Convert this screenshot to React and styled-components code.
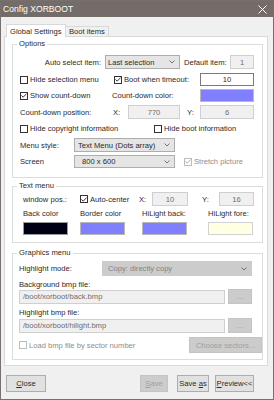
import React from "react";
import styled, { createGlobalStyle } from "styled-components";

const GlobalStyle = createGlobalStyle`
  html, body {
    margin: 0;
    padding: 0;
    background: #f0f0f0;
  }
  body {
    font-family: "Liberation Sans", Arial, sans-serif;
    font-size: 7.6px;
    color: #2a2a2a;
  }
  * {
    box-sizing: border-box;
  }
`;

const Window = styled.div`
  width: 274px;
  height: 400px;
  border: 1px solid #77706c;
  background: #f0f0f0;
  display: flex;
  flex-direction: column;
  overflow: hidden;
`;

const TitleBar = styled.div`
  height: 16px;
  flex-shrink: 0;
  background: #736c68;
  color: #fff;
  font-size: 8.6px;
  display: flex;
  align-items: center;
  justify-content: space-between;
  padding: 0 6px 0 2px;
`;

const Body = styled.div`
  flex: 1;
  display: flex;
  flex-direction: column;
  padding: 7px 5px 0 3px;
`;

const Tabs = styled.div`
  display: flex;
  align-items: flex-end;
  height: 13px;
  padding-left: 2px;
  margin-bottom: -1px;
`;

const Tab = styled.div`
  width: ${(p) => p.w}px;
  height: ${(p) => (p.active ? 13 : 11)}px;
  padding-left: 3px;
  border: 1px solid #d9d9d9;
  border-bottom: ${(p) => (p.active ? "none" : "1px solid #d9d9d9")};
  background: ${(p) => (p.active ? "#fff" : "#f0f0f0")};
  margin-left: ${(p) => (p.active ? 0 : -1)}px;
  position: relative;
  z-index: ${(p) => (p.active ? 1 : 0)};
  display: flex;
  align-items: center;
  white-space: nowrap;
`;

const Panel = styled.div`
  height: 330px;
  border: 1px solid #d9d9d9;
  background: #fff;
  padding: 2px 4px 5px 7px;
  display: flex;
  flex-direction: column;
`;

const Group = styled.fieldset`
  margin: ${(p) => p.mt || 0}px 0 0 0;
  padding: 0;
  min-width: 0;
  height: ${(p) => p.h}px;
  border: 1px solid #dcdcdc;
`;

const Legend = styled.legend`
  margin-left: 4px;
  padding: 0 2px;
  line-height: 10px;
`;

const Inner = styled.div`
  display: flex;
  flex-direction: column;
  padding: ${(p) => p.pt}px 0 0 ${(p) => p.pl}px;
`;

const Row = styled.div`
  display: flex;
  align-items: center;
  height: ${(p) => p.h}px;
  margin-top: ${(p) => p.mt || 0}px;
  white-space: nowrap;
`;

const Label = styled.span`
  width: ${(p) => (p.w ? `${p.w}px` : "auto")};
  margin-left: ${(p) => p.ml || 0}px;
  text-align: ${(p) => (p.right ? "right" : "left")};
  padding-right: ${(p) => (p.right ? 4 : 0)}px;
  color: ${(p) => (p.disabled ? "#8c8c8c" : "inherit")};
  flex-shrink: 0;
`;

const Field = styled.div`
  width: ${(p) => p.w}px;
  height: ${(p) => p.h || 14}px;
  flex-shrink: 0;
  border: 1px solid ${(p) => (p.disabled ? "#cfcfcf" : "#7a7a7a")};
  background: ${(p) => (p.disabled ? "#f0f0f0" : "#fff")};
  color: ${(p) => (p.disabled ? "#6d6d6d" : "inherit")};
  display: flex;
  align-items: center;
  justify-content: ${(p) => (p.left ? "flex-start" : "center")};
  padding: 0 3px;
`;

const Combo = styled.div`
  width: ${(p) => p.w}px;
  height: ${(p) => p.h || 14}px;
  flex-shrink: 0;
  background: ${(p) => (p.disabled ? "#cccccc" : "#e5e5e5")};
  border: 1px solid ${(p) => (p.disabled ? "#cccccc" : "#adadad")};
  color: ${(p) => (p.disabled ? "#838383" : "inherit")};
  display: flex;
  align-items: center;
  justify-content: space-between;
  padding: 0 4px 0 ${(p) => p.pad || 2}px;
`;

const Swatch = styled.div`
  width: ${(p) => p.w}px;
  height: 13px;
  flex-shrink: 0;
  background: ${(p) => p.color};
  border: 1px solid ${(p) => p.edge || "#b9b9b9"};
`;

const CheckItem = styled.label`
  width: ${(p) => (p.w ? `${p.w}px` : "auto")};
  margin-left: ${(p) => p.ml || 0}px;
  flex: ${(p) => (p.w ? "none" : 1)};
  display: flex;
  align-items: center;
  color: ${(p) => (p.disabled ? "#8c8c8c" : "inherit")};
`;

const Box = styled.span`
  width: 8px;
  height: 8px;
  margin-right: 2px;
  flex-shrink: 0;
  border: 1px solid ${(p) => (p.disabled ? "#bcbcbc" : "#333")};
  background: #fff;
  display: inline-flex;
  align-items: center;
  justify-content: center;
`;

const ColorGrid = styled.div`
  display: grid;
  grid-template-columns: 57px 62px 66px 45px;
  margin-top: 2px;
`;

const ColorCell = styled.div`
  display: flex;
  flex-direction: column;
  gap: 2px;
  line-height: 12px;
  white-space: nowrap;
`;

const Button = styled.div`
  width: ${(p) => p.w}px;
  height: ${(p) => p.h || 17}px;
  margin-left: ${(p) => p.ml || 0}px;
  flex-shrink: 0;
  background: ${(p) => (p.disabled ? "#cccccc" : "#e1e1e1")};
  border: 1px solid ${(p) => (p.disabled ? "#c4c4c4" : "#adadad")};
  color: ${(p) => (p.disabled ? "#a0a0a0" : "inherit")};
  display: flex;
  align-items: center;
  justify-content: center;
  white-space: pre;
`;

const ButtonBar = styled.div`
  display: flex;
  align-items: center;
  margin-top: 9px;
  padding: 0 14px 0 2px;
`;

const Spacer = styled.div`
  flex: 1;
`;

const U = styled.span`
  text-decoration: underline;
`;

const Chevron = () => (
  <svg width="6" height="4" viewBox="0 0 6 4">
    <polyline points="0.5,0.5 3,3 5.5,0.5" fill="none" stroke="#666" strokeWidth="0.9" />
  </svg>
);

const Check = ({ checked, disabled, children, w, ml }) => (
  <CheckItem w={w} ml={ml} disabled={disabled}>
    <Box disabled={disabled}>
      {checked && (
        <svg width="6" height="5" viewBox="0 0 6 5">
          <polyline
            points="0.4,2.4 2.2,4.2 5.6,0.6"
            fill="none"
            stroke={disabled ? "#a8a8a8" : "#222"}
            strokeWidth="0.9"
          />
        </svg>
      )}
    </Box>
    {children}
  </CheckItem>
);

const Select = ({ w, h, pad, disabled, children }) => (
  <Combo w={w} h={h} pad={pad} disabled={disabled}>
    <span>{children}</span>
    <Chevron />
  </Combo>
);

export default function App() {
  return (
    <>
      <GlobalStyle />
      <Window>
        <TitleBar>
          <span>Config XORBOOT</span>
          <svg width="9" height="9" viewBox="0 0 9 9">
            <path d="M0.5 0.5 L8.5 8.5 M8.5 0.5 L0.5 8.5" stroke="#fff" strokeWidth="1" />
          </svg>
        </TitleBar>
        <Body>
          <Tabs>
            <Tab active w={60}>Global Settings</Tab>
            <Tab w={44}>Boot items</Tab>
          </Tabs>
          <Panel>
            <Group h={139}>
              <Legend>Options</Legend>
              <Inner pt={6} pl={7}>
                <Row h={14}>
                  <Label w={85} right>Auto select item:</Label>
                  <Select w={75}>Last selection</Select>
                  <Label w={46} ml={4}>Default item:</Label>
                  <Field w={24} disabled>1</Field>
                </Row>
                <Row h={13} mt={4}>
                  <Check w={94}>Hide selection menu</Check>
                  <Check w={86} checked>Boot when timeout:</Check>
                  <Field w={54} h={13}>10</Field>
                </Row>
                <Row h={13} mt={3}>
                  <Check w={92} checked>Show count-down</Check>
                  <Label w={88}>Count-down color:</Label>
                  <Swatch w={54} color="#7f7fff" />
                </Row>
                <Row h={14} mt={3}>
                  <Label w={93}>Count-down position:</Label>
                  <Label w={15}>X:</Label>
                  <Field w={52} disabled>770</Field>
                  <Label w={13} ml={7}>Y:</Label>
                  <Field w={54} disabled>6</Field>
                </Row>
                <Row h={13} mt={3}>
                  <Check w={134}>Hide copyright information</Check>
                  <Check>Hide boot information</Check>
                </Row>
                <Row h={14} mt={3}>
                  <Label w={54}>Menu style:</Label>
                  <Select w={101} pad={3}>Text Menu (Dots array)</Select>
                </Row>
                <Row h={13} mt={3}>
                  <Label w={54}>Screen</Label>
                  <Select w={101} h={13} pad={7}>800 x 600</Select>
                  <Check ml={9} checked disabled>Stretch picture</Check>
                </Row>
              </Inner>
            </Group>

            <Group h={62} mt={3}>
              <Legend>Text menu</Legend>
              <Inner pt={1} pl={10}>
                <Row h={14}>
                  <Label w={57}>window pos.:</Label>
                  <Check w={59} checked>Auto-center</Check>
                  <Label w={13}>X:</Label>
                  <Field w={36} disabled>10</Field>
                  <Label w={17} ml={14}>Y:</Label>
                  <Field w={35} disabled>16</Field>
                </Row>
                <ColorGrid>
                  <ColorCell>
                    Back color
                    <Swatch w={45} color="#000014" edge="#9a9a9a" />
                  </ColorCell>
                  <ColorCell>
                    Border color
                    <Swatch w={45} color="#8080ff" />
                  </ColorCell>
                  <ColorCell>
                    HiLight back:
                    <Swatch w={45} color="#8080ff" />
                  </ColorCell>
                  <ColorCell>
                    HiLight fore:
                    <Swatch w={45} color="#ffffe1" edge="#d2d2d2" />
                  </ColorCell>
                </ColorGrid>
              </Inner>
            </Group>

            <Group h={112} mt={5}>
              <Legend>Graphics menu</Legend>
              <Inner pt={3} pl={6}>
                <Row h={15}>
                  <Label w={83}>Highlight mode:</Label>
                  <Select w={150} h={15} pad={5} disabled>Copy: directly copy</Select>
                </Row>
                <Row h={10} mt={3}>
                  <Label>Background bmp file:</Label>
                </Row>
                <Row h={15}>
                  <Field w={206} left disabled>/boot/xorboot/back.bmp</Field>
                  <Button w={24} h={15} ml={3} disabled>...</Button>
                </Row>
                <Row h={10} mt={3}>
                  <Label>Highlight bmp file:</Label>
                </Row>
                <Row h={15} mt={1}>
                  <Field w={206} left disabled>/boot/xorboot/hilight.bmp</Field>
                  <Button w={24} h={15} ml={3} disabled>...</Button>
                </Row>
                <Row h={16} mt={4}>
                  <Check disabled>Load bmp file by sector number</Check>
                  <Button w={73} h={16} disabled>Choose sectors...</Button>
                </Row>
              </Inner>
            </Group>
          </Panel>

          <ButtonBar>
            <Button w={40}>
              <span><U>C</U>lose</span>
            </Button>
            <Spacer />
            <Button w={28} disabled>
              <span><U>S</U>ave</span>
            </Button>
            <Button w={32} ml={9}>
              <span>Save <U>a</U>s</span>
            </Button>
            <Button w={39} ml={6}>
              <span><U>P</U>review&lt;&lt;</span>
            </Button>
          </ButtonBar>
        </Body>
      </Window>
    </>
  );
}
